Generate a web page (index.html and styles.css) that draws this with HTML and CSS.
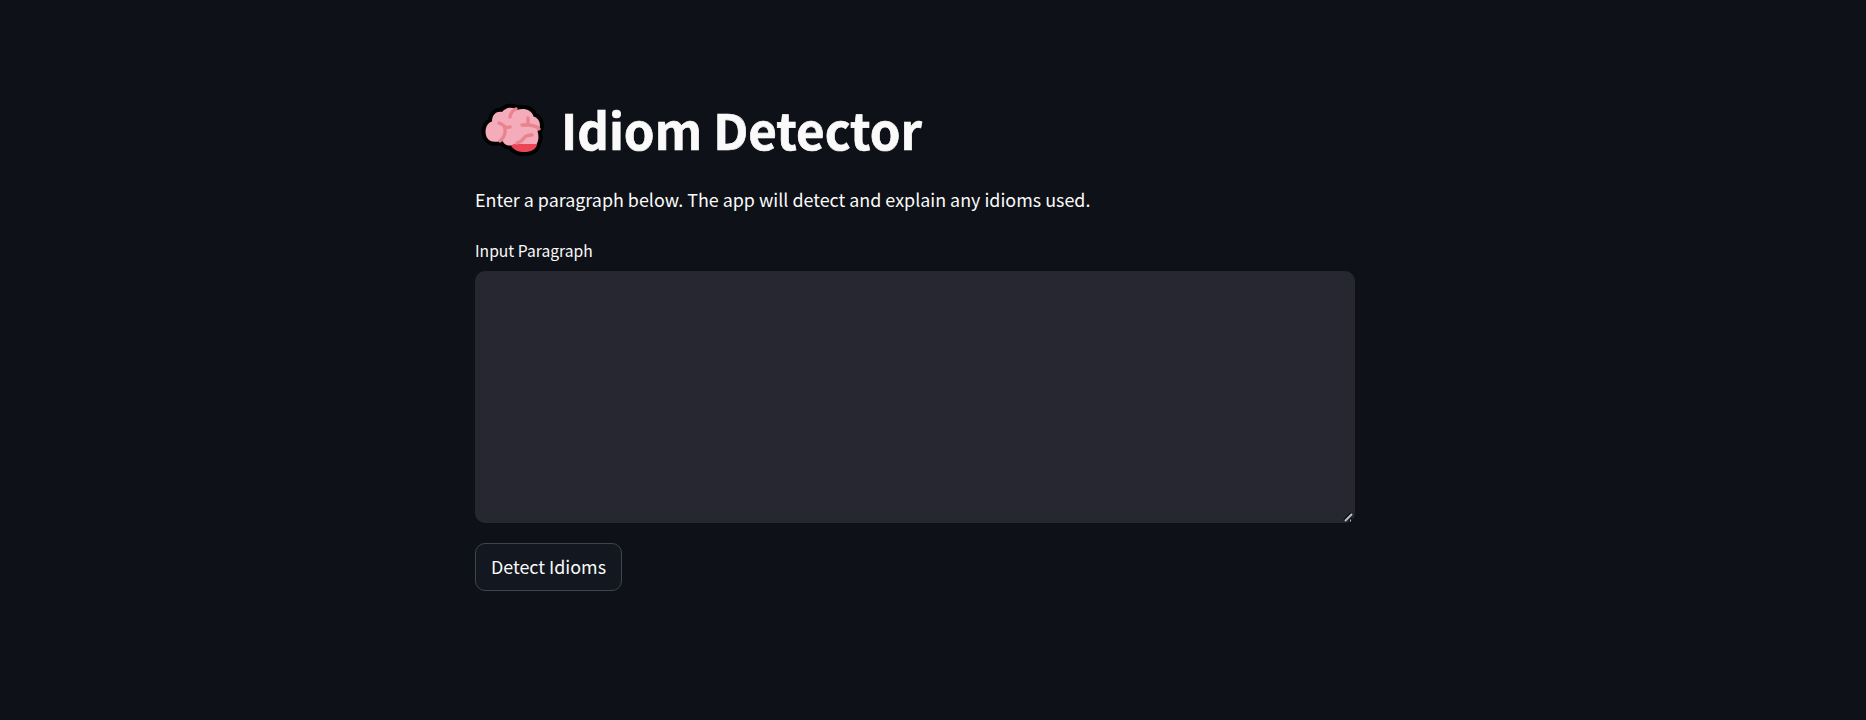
FILE: index.html
```html
<!DOCTYPE html>
<html lang="en">
<head>
<meta charset="utf-8">
<title>Idiom Detector</title>
<link rel="stylesheet" href="styles.css">
</head>
<body>
<main class="app">
  <h1 class="title">
    <svg class="brain" viewBox="0 0 80 70" aria-hidden="true">
      <path class="brain-outline" d="M23 46.5C13.5 46 13 29 22 26.500C22 19 27 16 32 17C36 12 43 11.500 47 15C54 12.500 62 15 63.500 21.500C70 23 72 32 67.500 36C69.500 42 68 47 66.500 49C66 59.500 45 59.500 41 50.500C35 51 34 48 32 45.500C29 47 26 47 23 46.500Z"/>
      <path class="brain-fill" d="M23 46.500C13.500 46 13 29 22 26.500C22 19 27 16 32 17C36 12 43 11.500 47 15C54 12.500 62 15 63.500 21.500C70 23 72 32 67.500 36C69.500 42 68 47 66.500 49.500L41 50.500C35 51 34 48 32 45.500C29 47 26 47 23 46.500Z"/>
      <path class="brain-stem" d="M41 50.500L44 49H67C66 59.500 45 59.500 41 50.500Z"/>
      <path class="brain-fold" d="M46 14Q41 16 40 22M29 28Q35 30 35 34Q36 41 30 46M40 32Q36 33 34 31M58 23V30M52 30H59Q67 31 69 34M47 48Q51 47 54 43Q56 40 62 40"/>
    </svg>
    <span>Idiom Detector</span>
  </h1>
  <p class="intro">Enter a paragraph below. The app will detect and explain any idioms used.</p>
  <label class="label" for="paragraph">Input Paragraph</label>
  <div class="field">
    <textarea class="input" id="paragraph"></textarea>
    <svg class="grip" viewBox="0 0 10 10" aria-hidden="true">
      <path class="grip-shadow" d="M1 8L8 1M6 9L9 6"/>
      <path class="grip-line" d="M2 9L9 2M7 8.500H8"/>
    </svg>
  </div>
  <button class="button" type="button">Detect Idioms</button>
</main>
</body>
</html>
```
FILE: styles.css
```css
* { box-sizing: border-box; }
body {
  margin: 0;
  height: 720px;
  overflow: hidden;
  background: #0e1117;
  color: #fafafa;
  font-family: "Noto Sans CJK SC", "Noto Sans", sans-serif;
}
.app {
  width: 880px;
  margin-left: 475px;
  padding-top: 95px;
  display: flex;
  flex-direction: column;
  align-items: flex-start;
}
.title {
  display: flex;
  align-items: flex-start;
  height: 70px;
  margin: 0;
  font-size: 49.2px;
  line-height: 68px;
  font-weight: 700;
  white-space: nowrap;
  -webkit-text-stroke: 0.7px #fafafa;
}
.brain {
  width: 80px;
  height: 70px;
  margin: 0 11px 0 -5px;
}
.brain path { stroke-linejoin: round; }
.brain-outline { fill: #000; stroke: #000; stroke-width: 8; }
.brain-fill { fill: #f4abba; }
.brain-stem { fill: #ea4656; }
.brain-fold { fill: none; stroke: #e9838f; stroke-width: 3.3; stroke-linecap: round; }
.intro {
  margin: 19px 0 0;
  font-size: 17.9px;
  line-height: 30px;
  white-space: nowrap;
}
.label {
  margin-top: 24px;
  font-size: 15.67px;
  line-height: 26px;
}
.field {
  position: relative;
  width: 880px;
  height: 252px;
  margin-top: 7px;
}
.input {
  display: block;
  width: 100%;
  height: 100%;
  padding: 20px;
  border: 0;
  border-radius: 10px;
  outline: 0;
  resize: none;
  background: #262730;
  color: inherit;
  font: inherit;
}
.grip {
  position: absolute;
  right: 2px;
  bottom: 1px;
  width: 10px;
  height: 10px;
}
.grip path { fill: none; stroke-width: 2; }
.grip-shadow { stroke: #101116; }
.grip-line { stroke: #bdbdbd; }
.button {
  width: 147px;
  height: 48px;
  margin-top: 20px;
  padding: 0 0 2px;
  border: 1px solid #41444c;
  border-radius: 10px;
  background: #131720;
  color: inherit;
  font: 400 17.9px/30px "Noto Sans CJK SC", "Noto Sans", sans-serif;
}
```
